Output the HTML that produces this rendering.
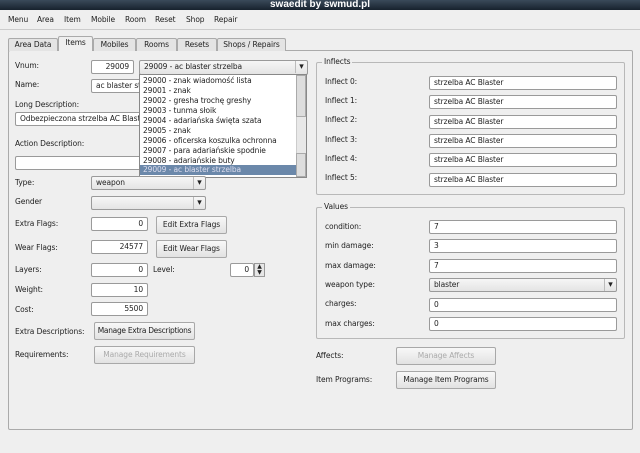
<!DOCTYPE html>
<html><head><meta charset="utf-8"><style>
*{box-sizing:border-box;margin:0;padding:0}
body{width:640px;height:453px;background:#efefef;position:relative;overflow:hidden;font-family:"DejaVu Sans","Liberation Sans",sans-serif;font-size:7.5px;letter-spacing:-0.1px;color:#222}
.a{position:absolute;white-space:nowrap}
.in{position:absolute;background:#fff;border:1px solid #9a9a9a;border-radius:2px;height:14px;line-height:12px;padding:0 4px;overflow:hidden;white-space:nowrap}
.r{text-align:right}
.btn{position:absolute;border:1px solid #a8a8a8;border-radius:2px;background:linear-gradient(#f8f8f8,#e2e2e2);height:18px;line-height:16px;text-align:center;white-space:nowrap;overflow:hidden}
.dis{color:#aaa}
.cb{position:absolute;border:1px solid #9a9a9a;border-radius:2px;background:linear-gradient(#f6f6f6,#e4e4e4);height:14px;line-height:12px;padding:0 4px;white-space:nowrap}
.cb:after{content:"▾";position:absolute;right:0;top:0;width:11px;height:12px;border-left:1px solid #bbb;text-align:center;font-size:9px}
.grp{position:absolute;border:1px solid #b8b8b8;border-radius:2px}
.gt{position:absolute;background:#efefef;padding:0 2px}
.tab{position:absolute;top:38px;height:13px;border:1px solid #aaa;border-bottom:none;background:#e4e4e4;text-align:center;line-height:12px;border-radius:2px 2px 0 0}
</style></head><body>
<div class="a" style="left:0;top:0;width:640px;height:10px;background:linear-gradient(#3a4a5a,#17222e)"></div>
<div class="a" style="left:270px;top:-1px;color:#fff;font-weight:bold;font-size:10px;font-family:'Liberation Sans',sans-serif;letter-spacing:0">swaedit by swmud.pl</div>
<div class="a" style="left:0;top:10px;width:640px;height:20px;border-bottom:1px solid #ccc"></div>
<div class="a" style="left:8px;top:15px">Menu</div>
<div class="a" style="left:37px;top:15px">Area</div>
<div class="a" style="left:64px;top:15px">Item</div>
<div class="a" style="left:91px;top:15px">Mobile</div>
<div class="a" style="left:125px;top:15px">Room</div>
<div class="a" style="left:155px;top:15px">Reset</div>
<div class="a" style="left:186px;top:15px">Shop</div>
<div class="a" style="left:214px;top:15px">Repair</div>

<div class="a" style="left:8px;top:50px;width:625px;height:380px;border:1px solid #aaa;border-radius:2px"></div>
<div class="tab" style="left:8px;width:50px">Area Data</div>
<div class="tab" style="left:58px;width:35px;top:36px;height:15px;background:#efefef">Items</div>
<div class="tab" style="left:93px;width:43px">Mobiles</div>
<div class="tab" style="left:136px;width:41px">Rooms</div>
<div class="tab" style="left:177px;width:40px">Resets</div>
<div class="tab" style="left:217px;width:69px">Shops / Repairs</div>

<div class="a" style="left:15px;top:61px">Vnum:</div>
<div class="in r" style="left:91px;top:60px;width:43px">29009</div>
<div class="a" style="left:15px;top:80px">Name:</div>
<div class="in" style="left:91px;top:79px;width:60px">ac blaster strzelba</div>
<div class="a" style="left:15px;top:100px">Long Description:</div>
<div class="in" style="left:15px;top:112px;width:135px">Odbezpieczona strzelba AC Blaster</div>
<div class="a" style="left:15px;top:139px">Action Description:</div>
<div class="in" style="left:15px;top:156px;width:135px"></div>

<div class="cb" style="left:139px;top:60px;width:169px;height:15px">29009 - ac blaster strzelba</div>
<div class="a" style="left:139px;top:74px;width:168px;height:104px;background:#fff;border:1px solid #888;line-height:10px;padding:1px 3px">
29000 - znak wiadomość lista<br>29001 - znak<br>29002 - gresha trochę greshy<br>29003 - tunma słoik<br>29004 - adariańska święta szata<br>29005 - znak<br>29006 - oficerska koszulka ochronna<br>29007 - para adariańskie spodnie<br>29008 - adariańskie buty</div>
<div class="a" style="left:140px;top:165px;width:156px;height:10px;background:#6b88aa;color:#dde;line-height:10px;padding-left:3px">29009 - ac blaster strzelba</div>
<div class="a" style="left:296px;top:75px;width:10px;height:102px;background:#e8e8e8;border-left:1px solid #ccc"></div>
<div class="a" style="left:296px;top:75px;width:10px;height:42px;background:#ddd;border:1px solid #aaa"></div>
<div class="a" style="left:296px;top:153px;width:10px;height:24px;background:#ddd;border:1px solid #aaa"></div>

<div class="a" style="left:15px;top:178px">Type:</div>
<div class="cb" style="left:91px;top:176px;width:115px">weapon</div>
<div class="a" style="left:15px;top:197px">Gender</div>
<div class="cb" style="left:91px;top:196px;width:115px"></div>
<div class="a" style="left:15px;top:219px">Extra Flags:</div>
<div class="in r" style="left:91px;top:217px;width:57px">0</div>
<div class="btn" style="left:156px;top:216px;width:71px">Edit Extra Flags</div>
<div class="a" style="left:15px;top:243px">Wear Flags:</div>
<div class="in r" style="left:91px;top:240px;width:57px">24577</div>
<div class="btn" style="left:156px;top:240px;width:71px">Edit Wear Flags</div>
<div class="a" style="left:15px;top:265px">Layers:</div>
<div class="in r" style="left:91px;top:263px;width:57px">0</div>
<div class="a" style="left:153px;top:265px">Level:</div>
<div class="in r" style="left:230px;top:263px;width:24px">0</div>
<div class="a" style="left:254px;top:263px;width:11px;height:14px;border:1px solid #999;background:#e6e6e6;font-size:6px;line-height:6px;text-align:center">▲<br>▼</div>
<div class="a" style="left:15px;top:285px">Weight:</div>
<div class="in r" style="left:91px;top:283px;width:57px">10</div>
<div class="a" style="left:15px;top:305px">Cost:</div>
<div class="in r" style="left:91px;top:302px;width:57px">5500</div>
<div class="a" style="left:15px;top:327px">Extra Descriptions:</div>
<div class="btn" style="left:94px;top:322px;width:101px;letter-spacing:-0.3px">Manage Extra Descriptions</div>
<div class="a" style="left:15px;top:350px">Requirements:</div>
<div class="btn dis" style="left:94px;top:346px;width:101px">Manage Requirements</div>

<div class="grp" style="left:316px;top:62px;width:309px;height:133px"></div>
<div class="gt" style="left:322px;top:57px">Inflects</div>
<div class="a" style="left:325px;top:77px">Inflect 0:</div><div class="in" style="left:429px;top:76px;width:188px">strzelba AC Blaster</div>
<div class="a" style="left:325px;top:96px">Inflect 1:</div><div class="in" style="left:429px;top:95px;width:188px">strzelba AC Blaster</div>
<div class="a" style="left:325px;top:115px">Inflect 2:</div><div class="in" style="left:429px;top:115px;width:188px">strzelba AC Blaster</div>
<div class="a" style="left:325px;top:135px">Inflect 3:</div><div class="in" style="left:429px;top:134px;width:188px">strzelba AC Blaster</div>
<div class="a" style="left:325px;top:154px">Inflect 4:</div><div class="in" style="left:429px;top:153px;width:188px">strzelba AC Blaster</div>
<div class="a" style="left:325px;top:173px">Inflect 5:</div><div class="in" style="left:429px;top:173px;width:188px">strzelba AC Blaster</div>

<div class="grp" style="left:316px;top:207px;width:309px;height:132px"></div>
<div class="gt" style="left:322px;top:202px">Values</div>
<div class="a" style="left:325px;top:222px">condition:</div><div class="in" style="left:429px;top:220px;width:188px">7</div>
<div class="a" style="left:325px;top:241px">min damage:</div><div class="in" style="left:429px;top:239px;width:188px">3</div>
<div class="a" style="left:325px;top:261px">max damage:</div><div class="in" style="left:429px;top:259px;width:188px">7</div>
<div class="a" style="left:325px;top:280px">weapon type:</div><div class="cb" style="left:429px;top:278px;width:188px">blaster</div>
<div class="a" style="left:325px;top:299px">charges:</div><div class="in" style="left:429px;top:298px;width:188px">0</div>
<div class="a" style="left:325px;top:319px">max charges:</div><div class="in" style="left:429px;top:317px;width:188px">0</div>

<div class="a" style="left:316px;top:351px">Affects:</div>
<div class="btn dis" style="left:396px;top:347px;width:100px">Manage Affects</div>
<div class="a" style="left:316px;top:375px">Item Programs:</div>
<div class="btn" style="left:396px;top:371px;width:100px">Manage Item Programs</div>
</body></html>
